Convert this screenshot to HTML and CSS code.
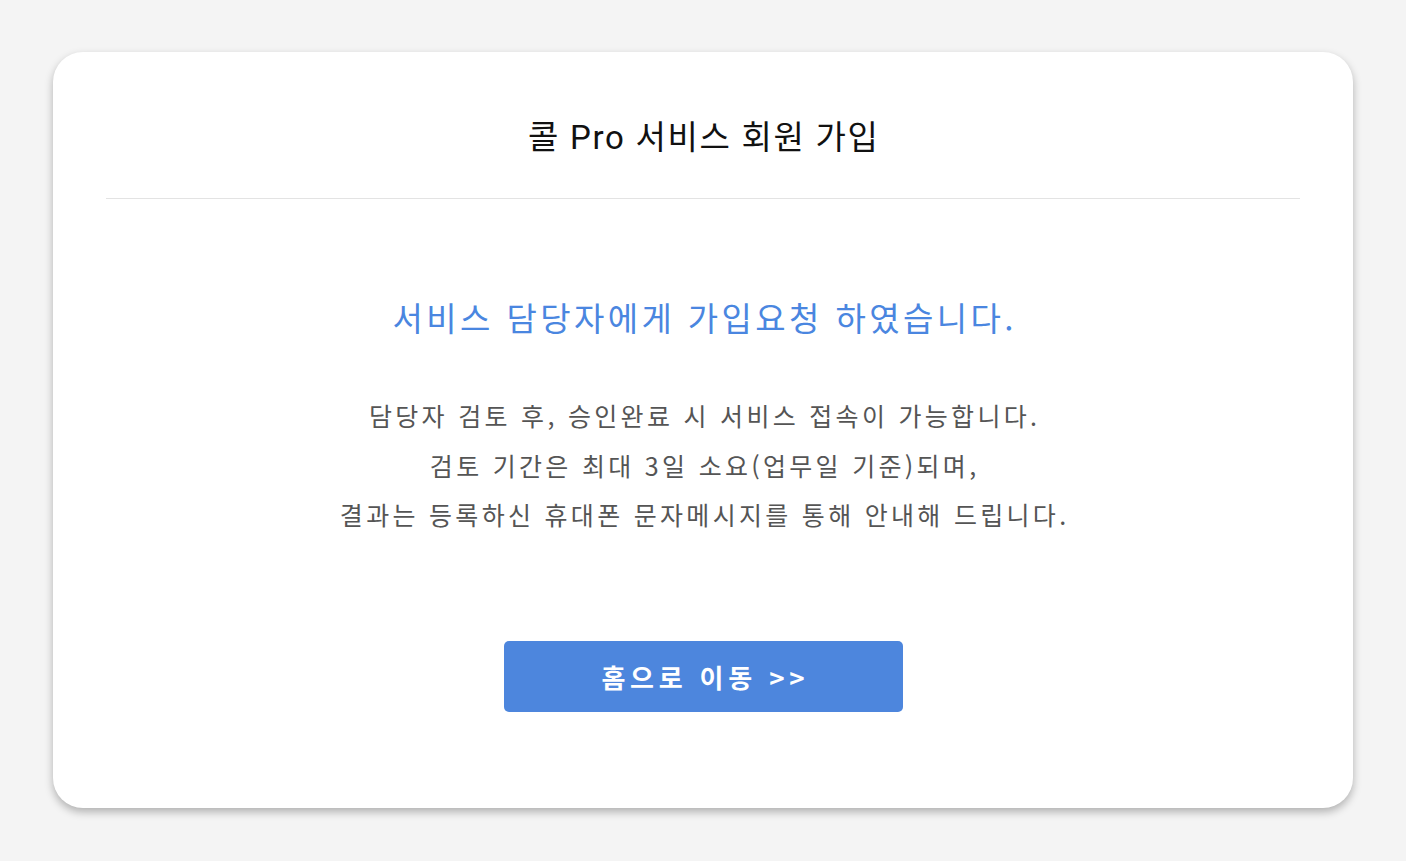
FILE: index.html
```html
<!DOCTYPE html>
<html lang="ko">
<head>
<meta charset="utf-8">
<title>콜 Pro 서비스 회원 가입</title>
<link rel="stylesheet" href="styles.css">
</head>
<body>
<main class="card">
  <header class="card-header">
    <h1 class="title">콜 Pro 서비스 회원 가입</h1>
  </header>
  <hr class="divider">
  <section class="content">
    <h2 class="notice">서비스 담당자에게 가입요청 하였습니다.</h2>
    <p class="desc">담당자 검토 후, 승인완료 시 서비스 접속이 가능합니다.<br>검토 기간은 최대 3일 소요(업무일 기준)되며,<br>결과는 등록하신 휴대폰 문자메시지를 통해 안내해 드립니다.</p>
    <button class="home-btn" type="button">홈으로 이동 &gt;&gt;</button>
  </section>
</main>
</body>
</html>
```

FILE: styles.css
```css
html, body {
  margin: 0;
  padding: 0;
}
body {
  background: #f4f4f4;
  font-family: "Noto Sans CJK KR", "Noto Sans", sans-serif;
  padding-top: 52px;
  min-height: 861px;
  box-sizing: border-box;
}
.card {
  width: 1300px;
  height: 756px;
  margin: 0 auto;
  background: #ffffff;
  border-radius: 30px;
  box-shadow: 0 4px 8px rgba(0, 0, 0, 0.28);
  box-sizing: border-box;
  display: flex;
  flex-direction: column;
}
.card-header {
  padding-top: 62px;
  padding-bottom: 36px;
  text-align: center;
}
.title {
  margin: 0;
  font-family: Roboto, "Noto Sans CJK KR", sans-serif;
  font-size: 33px;
  line-height: 48px;
  font-weight: 400;
  letter-spacing: 1.7px;
  padding-left: 1.7px;
  color: #111111;
}
.divider {
  margin: 0 53px;
  border: 0;
  height: 1px;
  background: #e3e3e3;
}
.content {
  display: flex;
  flex-direction: column;
  align-items: center;
  padding-top: 94px;
}
.notice {
  margin: 0;
  font-size: 33px;
  line-height: 48px;
  font-weight: 400;
  letter-spacing: 3.4px;
  padding-left: 3.4px;
  color: #4a86e0;
}
.desc {
  margin: 50px 0 0;
  font-size: 25px;
  line-height: 49.5px;
  letter-spacing: 3.3px;
  padding-left: 3.3px;
  color: #555555;
  text-align: center;
}
.home-btn {
  margin-top: 101px;
  width: 399px;
  height: 71px;
  border: 0;
  border-radius: 5px;
  background: #4d86dd;
  color: #ffffff;
  font-family: "Noto Sans CJK KR", sans-serif;
  font-size: 26px;
  font-weight: 700;
  letter-spacing: 4.8px;
  padding: 0 0 0 4.8px;
}
```
